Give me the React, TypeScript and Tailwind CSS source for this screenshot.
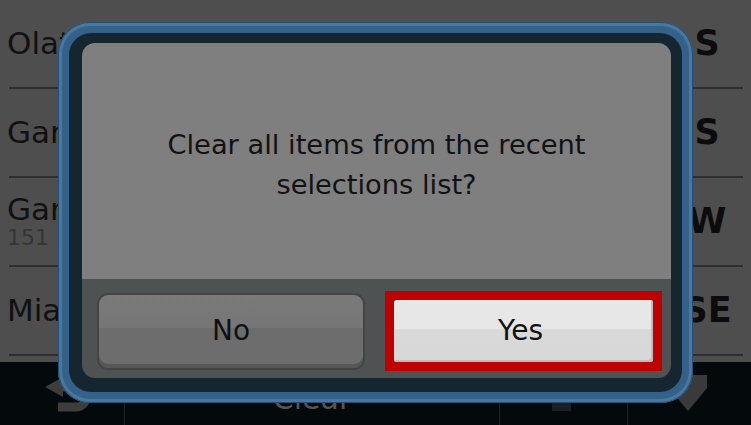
import React from 'react';

const font = { fontFamily: '"DejaVu Sans", "Liberation Sans", sans-serif' };

interface Place {
  name: string;
  sub?: string;
  dir: string;
}

const places: Place[] = [
  { name: 'Olathe Medical Center', dir: 'S' },
  { name: 'Garmin International', dir: 'S' },
  { name: 'Garmin AT', sub: '151 Harrison Ave', dir: 'W' },
  { name: 'Miami County', dir: 'SE' },
];

function BackIcon() {
  return (
    <svg width="60" height="44" viewBox="0 0 60 44" className="ml-[43px] mt-[13px] self-start">
      <polygon points="2,12 20,2 20,22" fill="#3d3d3d" />
      <path d="M18 12 H33 A10 10 0 0 1 33 32 H15" fill="none" stroke="#3d3d3d" strokeWidth="9" />
    </svg>
  );
}

function DownIcon() {
  return (
    <svg width="38" height="36" viewBox="0 0 38 36" className="ml-[41px] mt-[13px] self-start">
      <polygon points="0,0 38,0 38,13 19,36 0,13" fill="#3a3a3a" />
    </svg>
  );
}

export default function App() {
  return (
    <div className="relative w-[751px] h-[425px] overflow-hidden bg-[#4e4e4e]" style={font}>
      <div className="flex flex-col h-full">
        {/* list */}
        <div className="flex-1">
          {places.map((p, i) => (
            <div
              key={i}
              className="h-[89px] ml-[9px] mr-[8px] border-b-2 border-[#2f2f2f] flex items-center justify-between"
            >
              <div className="flex flex-col -ml-[2px]">
                <span className={p.sub ? 'text-[31px] leading-[32px] text-[#111]' : 'text-[31px] leading-none text-[#111]'}>
                  {p.name}
                </span>
                {p.sub && <span className="text-[22px] leading-[26px] text-[#353535]">{p.sub}</span>}
              </div>
              <span className="w-[72px] text-center text-[35px] font-bold leading-none text-[#0c0c0c]">{p.dir}</span>
            </div>
          ))}
        </div>

        {/* bottom toolbar */}
        <div className="h-[63px] bg-[#04090c] flex">
          <div className="w-[125px] flex border-r border-[#1c2226]">
            <BackIcon />
          </div>
          <div className="w-[375px] flex items-center justify-center border-r border-[#1c2226]">
            <span className="mt-[10px] text-[30px] leading-[30px] text-[#555]">Clear</span>
          </div>
          <div className="w-[128px] flex border-r border-[#1c2226]">
            <div className="ml-[52px] mt-[41px] w-[19px] h-[8px] bg-[#1d2023]" />
          </div>
          <div className="flex-1 flex">
            <DownIcon />
          </div>
        </div>
      </div>

      {/* confirm dialog */}
      <div className="absolute left-[58px] top-[22px] w-[635px] h-[381px] rounded-[32px] bg-[#33618a] p-[11px] shadow-[inset_0_0_0_1px_#274d70,inset_0_0_0_4px_#4877a0]">
        <div className="h-full rounded-[22px] bg-[#162631] pt-[10px] pl-[13px] pr-[11px] pb-[14px]">
          <div className="h-full rounded-[13px] overflow-hidden flex flex-col">
            <div className="flex-1 bg-[#7f7f7f] flex items-center justify-center pt-[8px]">
              <p className="text-center text-[27.3px] leading-[40px] text-[#121212]">
                Clear all items from the recent
                <br />
                selections list?
              </p>
            </div>
            <div className="h-[99px] bg-[#4e5253] flex items-center pl-[15px] pt-[5px] gap-[20px]">
              <button className="w-[268px] h-[77px] rounded-[11px] border-2 border-[#444] bg-[linear-gradient(to_bottom,#7a7a7a_0%,#767676_45%,#6d6d6d_46%,#6d6d6d_100%)] shadow-[inset_0_-4px_0_#575757] flex items-center justify-center text-[28px] text-[#111]">
                No
              </button>
              <div className="w-[277px] h-[80px] border-[9px] border-[#c00000]">
                <button className="w-full h-full pr-[6px] rounded-[3px] bg-[linear-gradient(to_bottom,#e8e8e8_0%,#e6e6e6_46%,#d9d9d9_47%,#d8d8d8_100%)] shadow-[inset_-2px_-2px_0_#bdbdbd] flex items-center justify-center text-[28px] text-[#111]">
                  Yes
                </button>
              </div>
            </div>
          </div>
        </div>
      </div>
    </div>
  );
}
